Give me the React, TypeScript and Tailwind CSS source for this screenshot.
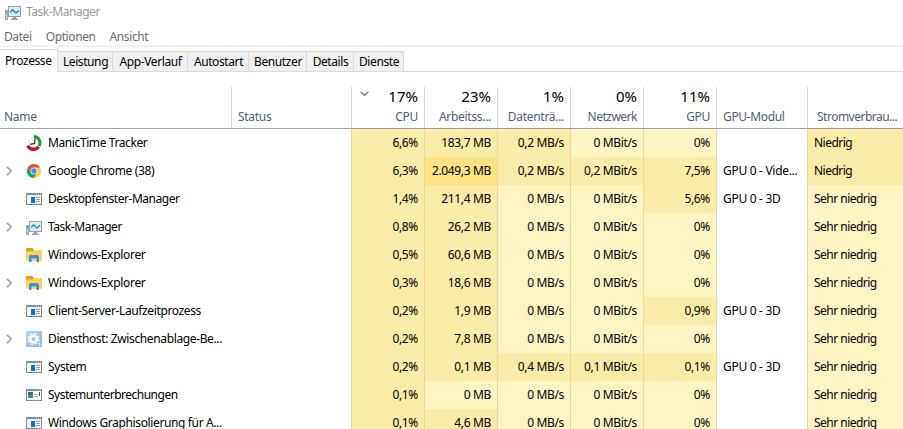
import type { ReactNode } from "react";

type IconName = "manic" | "chrome" | "window" | "monitor" | "folder" | "gear" | "interrupt";

function MonitorIcon() {
  return (
    <svg width="16" height="14" viewBox="0 0 16 14">
      <rect x="0" y="4" width="3" height="10" fill="#a3a7aa" />
      <rect x="1" y="5" width="1" height="2" fill="#35c635" />
      <path d="M1.5 8v5" stroke="#d2d5d7" />
      <rect x="3" y="0" width="13" height="11" fill="#9aa1a5" />
      <rect x="4" y="1" width="11" height="9" fill="#e3ebef" />
      <rect x="5" y="2" width="9" height="7" fill="#c9effc" />
      <path d="M5 6.3 L7.5 3.8 L11 7 L14 4.5" fill="none" stroke="#1681b8" strokeWidth="1.1" />
      <path d="M8 11h3v1.5h2V14H6v-1.5h2z" fill="#9b9fa2" />
    </svg>
  );
}

function Icon({ name }: { name: IconName }) {
  if (name === "monitor")
    return (
      <div className="pt-[2px]">
        <MonitorIcon />
      </div>
    );
  if (name === "manic")
    return (
      <svg width="16" height="16" viewBox="0 0 16 16">
        <path d="M8 1.6 A6.2 6.2 0 0 1 13 11" fill="none" stroke="#149a32" strokeWidth="3" />
        <path d="M1.7 10.6 A6.4 6.4 0 0 0 12.6 11.8" fill="none" stroke="#c5121b" strokeWidth="3.4" />
        <path d="M9 3.5L8.6 8.4L4.2 9.4" fill="none" stroke="#333" strokeWidth="1.3" />
        <path d="M3 5h1M5 3.2h1M2 7.3h1" stroke="#b5b5b5" />
      </svg>
    );
  if (name === "chrome")
    return (
      <svg width="16" height="16" viewBox="0 0 16 16">
        <circle cx="8" cy="8" r="7" fill="#ffcd40" />
        <path d="M1.94 4.5 A7 7 0 0 1 14.06 4.5 L8 4.6 L5 9.6 Z" fill="#dd5044" />
        <path d="M1.94 4.5 A7 7 0 0 0 7.8 15 L10.9 9.8 L5 9.6 Z" fill="#1aa05e" />
        <circle cx="8" cy="8" r="3.5" fill="#f4f6fa" />
        <circle cx="8" cy="8" r="2.7" fill="#4b8cf0" />
      </svg>
    );
  if (name === "folder")
    return (
      <svg width="16" height="14" viewBox="0 0 16 14">
        <path d="M0 1q0-1 1-1h5.5l1 1.5V4H0z" fill="#d9a01b" />
        <rect x="0" y="2" width="16" height="11" rx=".7" fill="#ffd35a" />
        <path d="M0 2h8l-1 1.5H0z" fill="#dda522" />
        <path d="M3 14V9q0-2 2-2h6q2 0 2 2v5h-2.5v-3.5h-5V14z" fill="#3294db" />
      </svg>
    );
  if (name === "gear")
    return (
      <svg width="16" height="16" viewBox="0 0 16 16">
        <defs>
          <linearGradient id="gearBg" x2="1" y2="1">
            <stop stopColor="#b9d5ef" />
            <stop offset="1" stopColor="#8eb8e3" />
          </linearGradient>
        </defs>
        <rect width="16" height="16" fill="url(#gearBg)" />
        <circle cx="7.5" cy="8" r="4.9" fill="none" stroke="#f4f9fe" strokeWidth="2.3" strokeDasharray="2.1 1.75" />
        <circle cx="7.5" cy="8" r="3.2" fill="none" stroke="#f4f9fe" strokeWidth="2.6" />
        <path d="M12 12l3 1.5M13.5 11v4" stroke="#dcebf9" />
      </svg>
    );
  const interrupt = name === "interrupt";
  return (
    <svg width="16" height="12" viewBox="0 0 16 12">
      <rect width="16" height="12" fill="#858c90" />
      <rect x="1" y="2" width="14" height="9" fill="#f5f6f6" />
      <path d="M10 1h1M12 1h1M14 1h1" stroke="#dfe3e5" strokeWidth=".8" />
      {interrupt ? (
        <>
          <rect x="2" y="3" width="5" height="6" fill="#2e7194" />
          <path d="M2 6h5v3H2z" fill="#439674" />
          <path d="M8 5.5h4M8 7.5h4" stroke="#abb0b4" />
          <path d="M13.5 3v4" stroke="#35516b" />
        </>
      ) : (
        <>
          <rect x="5" y="4" width="4" height="6" fill="#0078d7" />
          <path d="M10 4.5h4M10 6.5h4M10 8.5h4" stroke="#979ea3" />
        </>
      )}
    </svg>
  );
}

const GRID = "grid grid-cols-[231px_120px_73px_73px_73px_73px_73px_91px_96px]";
const TIERS = ["bg-[#fff4c4]", "bg-[#f9eca8]", "bg-[#ffe284]"];

interface Process {
  name: string;
  icon: IconName;
  expand?: boolean;
  values: string[];
  tiers: number[];
  gpu?: string;
  power: string;
  tracking?: string;
}

const low = "Sehr niedrig";
const processes: Process[] = [
  { name: "ManicTime Tracker", icon: "manic", values: ["6,6%", "183,7 MB", "0,2 MB/s", "0 MBit/s", "0%"], tiers: [1, 1, 1, 0, 0], power: "Niedrig" },
  { name: "Google Chrome (38)", icon: "chrome", expand: true, values: ["6,3%", "2.049,3 MB", "0,2 MB/s", "0,2 MBit/s", "7,5%"], tiers: [1, 2, 1, 1, 1], gpu: "GPU 0 - Vide...", power: "Niedrig", tracking: "tracking-[-0.35px]" },
  { name: "Desktopfenster-Manager", icon: "window", values: ["1,4%", "211,4 MB", "0 MB/s", "0 MBit/s", "5,6%"], tiers: [1, 1, 0, 0, 1], gpu: "GPU 0 - 3D", power: low, tracking: "tracking-[-0.45px]" },
  { name: "Task-Manager", icon: "monitor", expand: true, values: ["0,8%", "26,2 MB", "0 MB/s", "0 MBit/s", "0%"], tiers: [1, 1, 0, 0, 0], power: low, tracking: "tracking-[-0.45px]" },
  { name: "Windows-Explorer", icon: "folder", values: ["0,5%", "60,6 MB", "0 MB/s", "0 MBit/s", "0%"], tiers: [1, 1, 0, 0, 0], power: low, tracking: "tracking-[-0.3px]" },
  { name: "Windows-Explorer", icon: "folder", expand: true, values: ["0,3%", "18,6 MB", "0 MB/s", "0 MBit/s", "0%"], tiers: [1, 1, 0, 0, 0], power: low, tracking: "tracking-[-0.3px]" },
  { name: "Client-Server-Laufzeitprozess", icon: "window", values: ["0,2%", "1,9 MB", "0 MB/s", "0 MBit/s", "0,9%"], tiers: [1, 1, 0, 0, 1], gpu: "GPU 0 - 3D", power: low, tracking: "tracking-[-0.37px]" },
  { name: "Diensthost: Zwischenablage-Be...", icon: "gear", expand: true, values: ["0,2%", "7,8 MB", "0 MB/s", "0 MBit/s", "0%"], tiers: [1, 1, 0, 0, 0], power: low, tracking: "tracking-[-0.37px]" },
  { name: "System", icon: "window", values: ["0,2%", "0,1 MB", "0,4 MB/s", "0,1 MBit/s", "0,1%"], tiers: [1, 1, 1, 1, 1], gpu: "GPU 0 - 3D", power: low },
  { name: "Systemunterbrechungen", icon: "interrupt", values: ["0,1%", "0 MB", "0 MB/s", "0 MBit/s", "0%"], tiers: [1, 0, 0, 0, 0], power: low, tracking: "tracking-[-0.5px]" },
  { name: "Windows Graphisolierung für A...", icon: "window", values: ["0,1%", "4,6 MB", "0 MB/s", "0 MBit/s", "0%"], tiers: [1, 1, 0, 0, 0], power: low, tracking: "tracking-[-0.37px]" },
];

const metrics = [
  ["17%", "CPU"],
  ["23%", "Arbeitss..."],
  ["1%", "Datenträ..."],
  ["0%", "Netzwerk"],
  ["11%", "GPU"],
];

const tabs = [
  { label: "Leistung", width: "w-[55px]" },
  { label: "App-Verlauf", width: "w-[75px]" },
  { label: "Autostart", width: "w-[61px]" },
  { label: "Benutzer", width: "w-[58px]" },
  { label: "Details", width: "w-[47px]" },
  { label: "Dienste", width: "w-[50px]" },
];

function HeaderCell({ children, className = "" }: { children: ReactNode; className?: string }) {
  return (
    <div className={`flex flex-col justify-end border-l border-[#d7d7d7] pb-[3px] leading-4 text-[#4c607a] ${className}`}>
      {children}
    </div>
  );
}

function Row({ p }: { p: Process }) {
  return (
    <div className={`${GRID} h-7 shrink-0 leading-3`}>
      <div className="flex items-center">
        <div className="flex w-[26px] shrink-0 justify-center pr-[7px]">
          {p.expand && (
            <svg width="7" height="10" viewBox="0 0 7 10">
              <path d="M1 .8l4.2 4.2L1 9.2" fill="none" stroke="#a6a6a6" strokeWidth="1.7" />
            </svg>
          )}
        </div>
        <div className="flex w-[22px] shrink-0 items-center">
          <Icon name={p.icon} />
        </div>
        <span className={p.tracking ?? "tracking-[-0.4px]"}>{p.name}</span>
      </div>
      <div />
      {p.values.map((v, i) => (
        <div key={i} className={`border-l border-[#e9d7a0] py-2 pr-[6px] text-right tracking-[-0.35px] ${TIERS[p.tiers[i]]}`}>
          {v}
        </div>
      ))}
      <div className="border-l border-[#e9d7a0] py-2 pl-[6px]">{p.gpu}</div>
      <div className={`border-l border-[#e9d7a0] py-2 pl-[6px] tracking-[-0.52px] ${p.power === low ? TIERS[0] : TIERS[1]}`}>
        {p.power}
      </div>
    </div>
  );
}

export default function App() {
  return (
    <div className="flex h-[429px] w-[903px] flex-col overflow-hidden bg-white font-['Noto_Sans','Open_Sans',sans-serif] text-[12px] tracking-[-0.3px] whitespace-nowrap text-black">
      <div className="flex h-[25px] shrink-0 items-center pl-[5px] text-[#999]">
        <MonitorIcon />
        <span className="-mt-px pl-[5px] tracking-[-0.45px]">Task-Manager</span>
      </div>
      <div className="flex h-[22px] shrink-0 items-center gap-[14px] border-b-2 border-[#f0f0f0] pt-[3px] pl-1 tracking-[-0.4px] text-[#6d6d6d]">
        <span>Datei</span>
        <span>Optionen</span>
        <span>Ansicht</span>
      </div>
      <div className="flex h-[25px] shrink-0 items-end tracking-[-0.4px]">
        <div className="h-[23px] w-[58px] border-t border-r border-[#d9d9d9] pl-[5px] leading-[21px]">Prozesse</div>
        <div className="flex h-[21px] grow border-b border-[#d9d9d9]">
          {tabs.map((t) => (
            <div key={t.label} className={`${t.width} border-t border-r border-[#d9d9d9] bg-[#f0f0f0] pl-px text-center leading-5`}>
              {t.label}
            </div>
          ))}
        </div>
      </div>
      <div className={`${GRID} mt-[15px] h-[42px] shrink-0 border-b border-[#a0a0a0]`}>
        <HeaderCell className="border-l-0 pl-1">Name</HeaderCell>
        <HeaderCell className="pl-[6px]">Status</HeaderCell>
        {metrics.map(([value, label], i) => (
          <HeaderCell key={label} className="pr-[6px] text-right">
            <div className="mb-1 flex items-center justify-between text-[15px] leading-[18px] tracking-normal text-black">
              {i === 0 ? (
                <svg width="9" height="6" viewBox="0 0 9 6" className="mb-[5px] ml-2">
                  <path d="M.5 .8l4 3.5 4-3.5" fill="none" stroke="#708599" strokeWidth="1.3" />
                </svg>
              ) : (
                <span />
              )}
              <span>{value}</span>
            </div>
            <div className={label === "Netzwerk" ? "tracking-[-0.5px]" : ""}>{label}</div>
          </HeaderCell>
        ))}
        <HeaderCell className="pl-[6px] tracking-[-0.35px]">GPU-Modul</HeaderCell>
        <HeaderCell className="pl-[9px] tracking-[-0.5px]">Stromverbrau...</HeaderCell>
      </div>
      {processes.map((p, i) => (
        <Row key={i} p={p} />
      ))}
    </div>
  );
}
